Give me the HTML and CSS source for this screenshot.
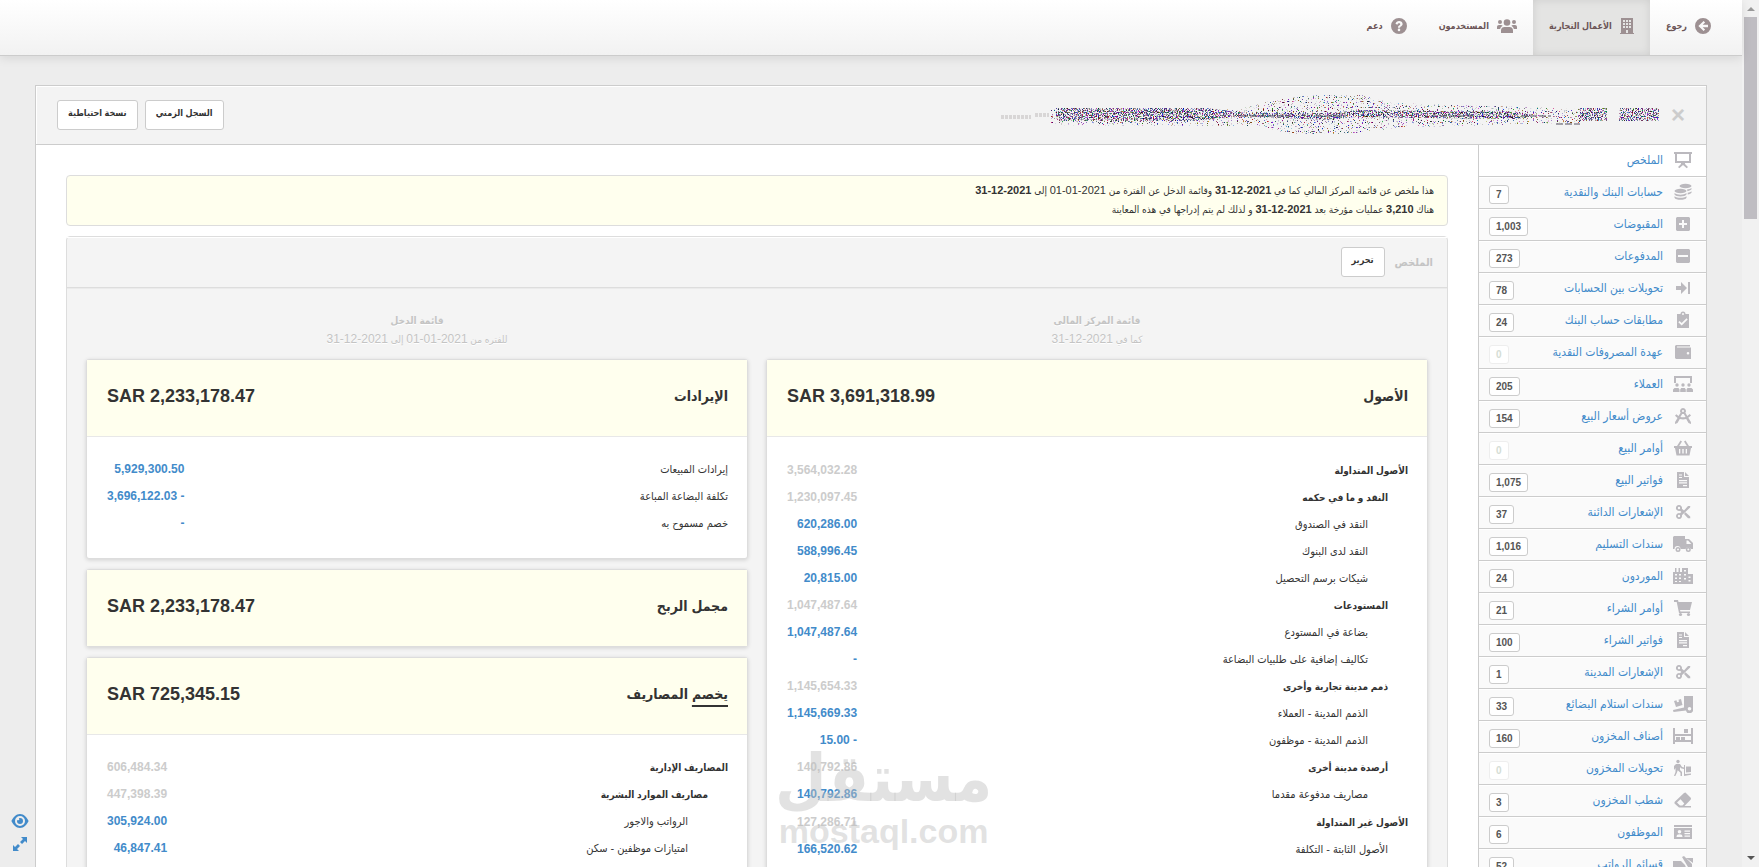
FILE: index.html
```html
<!DOCTYPE html>
<html lang="ar" dir="rtl">
  <head>
    <meta charset="UTF-8" />
    <meta name="viewport" content="width=device-width, initial-scale=1.0" />
    <title>الملخص</title>
    <link rel="stylesheet" href="styles.css">
  </head>

  <body>
    <!-- icons -->
    <svg class="sprite" aria-hidden="true">
      <symbol id="i-back" viewBox="0 0 16 16"><path fill-rule="evenodd" d="M8 0a8 8 0 1 1 0 16A8 8 0 0 1 8 0zM8.600 3L3.400 8l5.200 5 1.500-1.500L7.700 9.200H13V6.800H7.700l2.400-2.300z"/></symbol>
      <symbol id="i-building" viewBox="0 0 14 16"><path fill-rule="evenodd" d="M1 0h12v15h1v1H0v-1h1zM3 2v2h2V2zM6 2v2h2V2zM9 2v2h2V2zM3 5v2h2V5zM6 5v2h2V5zM9 5v2h2V5zM3 8v2h2V8zM6 8v2h2V8zM9 8v2h2V8zM6 12v3h2v-3z"/></symbol>
      <symbol id="i-users" viewBox="0 0 20 16"><circle cx="10" cy="4.500" r="3.300"/><circle cx="3" cy="4" r="2"/><circle cx="17" cy="4" r="2"/><path d="M4 15v-2.500C4 10 5.600 9 7.500 9h5c1.900 0 3.500 1 3.500 3.500V15zM0 11V9c0-1.300.8-2 2-2h2c.6 0 1.200.2 1.600.7C4.200 8.500 3.400 9.500 3.200 11zM20 11V9c0-1.300-.8-2-2-2h-2c-.6 0-1.200.2-1.600.7 1.400.8 2.200 1.800 2.400 3.300z"/></symbol>
      <symbol id="i-help" viewBox="0 0 16 16"><path fill-rule="evenodd" d="M8 0a8 8 0 1 1 0 16A8 8 0 0 1 8 0zM4.500 5.800l1.900.9C6.700 5.800 7.300 5.300 8 5.300c.8 0 1.300.4 1.300 1 0 1.200-2.400 1.200-2.400 3.400h2.200c0-1.400 2.500-1.500 2.500-3.700C11.600 4.200 10 3.100 8.100 3.100c-1.800 0-3 .9-3.600 2.700zM8 10.600a1.300 1.300 0 1 0 0 2.600 1.300 1.300 0 0 0 0-2.600z"/></symbol>
      <symbol id="i-summary" viewBox="0 0 20 18"><path fill-rule="evenodd" d="M1 1h18v2h-1v9h-6v1l3 3-1.300 1.200L10 14l-3.700 3.200L5 16l3-3v-1H2V3H1zM4 3v7h12V3z"/></symbol>
      <symbol id="i-coins" viewBox="0 0 20 18"><ellipse cx="12.500" cy="3" rx="6" ry="2.200"/><ellipse cx="7.500" cy="8" rx="6" ry="2.200"/><path d="M1.500 10c3 2.200 9 2.200 12 0v1.500c-1 2.600-11 2.600-12 0zM1.500 13.200c3 2.200 9 2.200 12 0v1.500c-1 2.800-11 2.800-12 0zM14 6.500c2-.3 3.600-.8 4.500-1.500v1.300c-.5.800-2 1.500-4 1.900zM14.700 9.800c1.700-.3 3-.8 3.800-1.500v1.400c-.5.800-1.800 1.300-3.800 1.700z"/></symbol>
      <symbol id="i-plus" viewBox="0 0 20 18"><path fill-rule="evenodd" d="M4 2h12l1 1v12l-1 1H4l-1-1V3zM9 5v3H6v2h3v3h2v-3h3V8h-3V5z"/></symbol>
      <symbol id="i-minus" viewBox="0 0 20 18"><path fill-rule="evenodd" d="M4 2h12l1 1v12l-1 1H4l-1-1V3zM5 8v2h10V8z"/></symbol>
      <symbol id="i-transfer" viewBox="0 0 20 18"><path d="M3 7h5V3l6 6-6 6v-4H3zM15 3h2v12h-2z"/></symbol>
      <symbol id="i-check" viewBox="0 0 20 18"><path fill-rule="evenodd" d="M4 3h3.500a2.500 2.500 0 0 1 5 0H16v14H4zM6.500 10L5.300 11.200 8.700 14.500l6-6L13.500 7.200 8.700 12zM10 2a1 1 0 1 0 0 2 1 1 0 0 0 0-2z"/></symbol>
      <symbol id="i-wallet" viewBox="0 0 20 18"><path fill-rule="evenodd" d="M3 2h14v1.500H4v1h14V16H3l-1-1V3zM15 9a1.300 1.300 0 1 0 0 2.600A1.300 1.300 0 0 0 15 9z"/></symbol>
      <symbol id="i-customers" viewBox="0 0 20 18"><path d="M1 1h18v7h-2V3H3v5H1z"/><circle cx="4" cy="10" r="1.700"/><circle cx="10" cy="10" r="1.700"/><circle cx="16" cy="10" r="1.700"/><path d="M0 17v-2.500L1.500 13h4L6.500 14.500V17zM7.200 17v-2.500l1-1.500h3.600l1 1.500V17zM13.500 17v-2.500l1-1.500h4l1.500 1.500V17z"/></symbol>
      <symbol id="i-quote" viewBox="0 0 20 18"><path fill-rule="evenodd" d="M10 1a3 3 0 0 1 2.400 4.800l1.900 3.300 2.400-2 1.300 1.400-2.700 2.200 2.600 4.300.1 2-2.500-1-2.300-4c-2.200.7-4.400.6-6.400 0l-2.300 4-2.500 1 .1-2L4.500 11 2 8.700l1.300-1.500L5.500 9l2.100-3.200A3 3 0 0 1 10 1zm0 2a1 1 0 1 0 0 2 1 1 0 0 0 0-2zM9.200 6.900L7.400 10c1.700.4 3.500.4 5.200 0l-1.800-3.100z"/></symbol>
      <symbol id="i-basket" viewBox="0 0 20 18"><path fill-rule="evenodd" d="M1 7h3l3.500-5.500L9 2.400 6.200 7h7.600L11 2.400l1.500-.9L16 7h3v2h-1l-1.500 7.500h-13L2 9H1zM6 10v4.500h1.300V10zM9.300 10v4.500h1.400V10zM12.700 10v4.500H14V10z"/></symbol>
      <symbol id="i-file" viewBox="0 0 20 18"><path fill-rule="evenodd" d="M4 1h7v5h5v11H4zM12 1l4 4h-4zM6 3.500v1h3v-1zM6 6v1h3V6zM6 9v1.200h8V9zM6 11.300v1.200h8v-1.200zM10 14v1.200h4V14z"/></symbol>
      <symbol id="i-cut" viewBox="0 0 20 18"><path fill-rule="evenodd" d="M6 2a3 3 0 0 1 2.900 3.800L11 7.600 15 3h2.300l-.2 1.500L8.900 12.200A3 3 0 1 1 7 10.200L8.400 9 7 7.800A3 3 0 1 1 6 2zm0 1.800a1.200 1.200 0 1 0 0 2.400 1.200 1.200 0 0 0 0-2.400zm0 8a1.200 1.200 0 1 0 0 2.400 1.200 1.200 0 0 0 0-2.400zM12.500 9.300l4.700 4.300.1 1.700H15l-4-4.400z"/></symbol>
      <symbol id="i-truck" viewBox="0 0 20 18"><path fill-rule="evenodd" d="M1 1h11v3h4l4 4v6h-2a3 3 0 0 0-5.500 0h-5A3 3 0 0 0 1.500 14H0V2zM13.500 5.500V9h4.800l-3.300-3.500z"/><path fill-rule="evenodd" d="M5 12a2.500 2.500 0 1 1 0 5 2.500 2.500 0 0 1 0-5zm0 1.500a1 1 0 1 0 0 2 1 1 0 0 0 0-2zM15.300 12a2.500 2.500 0 1 1 0 5 2.500 2.500 0 0 1 0-5zm0 1.500a1 1 0 1 0 0 2 1 1 0 0 0 0-2z"/></symbol>
      <symbol id="i-city" viewBox="0 0 20 18"><path fill-rule="evenodd" d="M0 5h2V1h1.500v4h2V1H7v4h2V1h6v6h5v10H0zM2 7v1.500h2V7zM6 7v1.500h2V7zM11 3v1.500h2V3zM11 7v1.500h2V7zM2 10.500V12h2v-1.500zM6 10.500V12h2v-1.500zM11 11v1.500h2V11zM15.500 9.500V11h2V9.500zM15.500 13v1.500h2V13zM2 14v1h2v-1zM6 14v1h2v-1z"/></symbol>
      <symbol id="i-cart" viewBox="0 0 20 18"><path d="M1 1h4l.5 2H19l-2 8H7l.4 1.500H17V14H6L3.700 3H1z"/><circle cx="7.500" cy="15.500" r="1.600"/><circle cx="15.500" cy="15.500" r="1.600"/></symbol>
      <symbol id="i-receive" viewBox="0 0 20 18"><path fill-rule="evenodd" d="M11 1h9v13a3.500 3.500 0 0 1-7 1.500L.5 17 0 15l11-2.500zM16.500 12a1.800 1.800 0 1 0 0 3.600 1.800 1.800 0 0 0 0-3.600z"/><path d="M1 6l2.500-.7.5 2 2-.5-.5-2L8 4l1.500 6-6.500 2z"/></symbol>
      <symbol id="i-shelf" viewBox="0 0 20 18"><path d="M0 1h2v6h16V1h2v16h-2v-2H2v2H0zM2 9v4h16V9z" fill-rule="evenodd"/><path d="M11 2h4v4h-4zM3 10h4v3H3zM8 10h4v3H8z"/></symbol>
      <symbol id="i-dolly" viewBox="0 0 20 18"><circle cx="5" cy="2.500" r="1.700"/><path d="M3 5h4l2 3 2 .6V10L8 9.300 7 8v3l2 2v4H7.500v-3.300L4.700 11.200 4 13.500 2.300 17H1l1.500-4V9L1 11V7zM11 6h1v9l6-.5v1.300L11 17zM13 7.500h5V13l-5 .5z"/></symbol>
      <symbol id="i-eraser" viewBox="0 0 20 18"><path fill-rule="evenodd" d="M1.500 11L11 2l1.500-.5L18 7l-.2 1.500L11.500 15H18v1.500H6L1.500 12.500zM7.500 8.200L4 11.600 7 14.500h2.500l1.800-2z"/></symbol>
      <symbol id="i-card" viewBox="0 0 20 18"><path d="M1 2h18v2H1z"/><path fill-rule="evenodd" d="M1 5h18v11H1zM6.500 7a1.800 1.800 0 1 0 0 3.600 1.800 1.800 0 0 0 0-3.600zM3.500 14h6c0-2-1-2.700-3-2.700s-3 .7-3 2.700zM11.500 7.500v1.200H17V7.500zM11.500 10v1.200H17V10zM11.500 12.500v1.200H17v-1.200z"/></symbol>
      <symbol id="i-payslip" viewBox="0 0 20 18"><path d="M0 6h8l4 4 2 5H0z"/><path d="M9 2l2-1 8 8v4l-4-1zM13 3h7v5z"/></symbol>
      <symbol id="i-eye" viewBox="0 0 18 14"><path fill-rule="evenodd" d="M9 0c4 0 7 3.500 8.600 7C16 10.500 13 14 9 14S2 10.500.4 7C2 3.500 5 0 9 0zm0 2a5 5 0 1 0 0 10A5 5 0 0 0 9 2zM9 4a3 3 0 1 1-3 3c0-.4.1-.8.300-1.100.3.700 1.900.6 2-.7 0-.5-.1-.7-.4-1C8.200 4.100 8.600 4 9 4z"/></symbol>
      <symbol id="i-expand" viewBox="0 0 14 14"><path d="M8 0h6v6l-2-2-3 3-2-2 3-3zM6 14H0V8l2 2 3-3 2 2-3 3z"/></symbol>
    </svg>

    <div class="scrollbar" aria-hidden="true">
      <span class="arrow up"></span>
      <span class="thumb"></span>
      <span class="arrow down"></span>
    </div>

    <div class="page">
      <nav class="navbar">
        <a href="#"><svg class="nav-icon"><use href="#i-back"/></svg>رجوع</a>
        <a href="#" class="active"><svg class="nav-icon narrow"><use href="#i-building"/></svg>الأعمال التجارية</a>
        <a href="#"><svg class="nav-icon wide"><use href="#i-users"/></svg>المستخدمون</a>
        <a href="#"><svg class="nav-icon"><use href="#i-help"/></svg>دعم</a>
      </nav>

      <div class="panel">
        <div class="panel-header">
          <div class="business">
            <button class="close" aria-label="إغلاق">×</button>
            <svg class="scribble" viewBox="0 0 660 40" preserveAspectRatio="none" aria-hidden="true">
              <filter id="grain" x="0" y="0" width="100%" height="100%" color-interpolation-filters="sRGB">
                <feTurbulence type="fractalNoise" baseFrequency="0.8" numOctaves="1" seed="4" result="n"/>
                <feColorMatrix in="n" values="2 0 0 0 -.65  0 1.600 0 0 -.5  0 0 2 0 -.55  0 0 0 12 -5.700"/>
                <feComposite in2="SourceGraphic" operator="in"/>
              </filter>
              <filter id="sparse" x="0" y="0" width="100%" height="100%" color-interpolation-filters="sRGB">
                <feTurbulence type="fractalNoise" baseFrequency="0.8" numOctaves="1" seed="9" result="n"/>
                <feColorMatrix in="n" values="2 0 0 0 -.6  0 1.600 0 0 -.45  0 0 2 0 -.5  0 0 0 14 -8.300"/>
                <feComposite in2="SourceGraphic" operator="in"/>
              </filter>
              <g filter="url(#sparse)"><path d="M50 14h190l30-8 40-6h50l30 8 190 6v14l-180 4-50 7h-60l-30-8-210-1z"/></g>
              <g filter="url(#grain)"><path d="M55 13h150l40 5h90l20-3 160 2 20 3-20 4-160-2-30 3-80-4-50 5H55zM578 13h28v13h-28zM618 13h40v13h-40z"/></g>
              <path class="thread" d="M240 21h50M315 21h30M430 21h45M520 21h30M555 29h24"/>
              <path class="fade" d="M0 22h30M34 20h14"/>
            </svg>
          </div>
          <div class="actions">
            <button class="btn">السجل الزمني</button>
            <button class="btn">نسخة احتياطية</button>
          </div>
        </div>

        <div class="panel-body">
          <ul class="sidebar">
            <li class="active"><a href="#"><svg class="icon"><use href="#i-summary"/></svg>الملخص</a></li>
            <li><a href="#"><svg class="icon"><use href="#i-coins"/></svg>حسابات البنك والنقدية</a><span class="badge">7</span></li>
            <li><a href="#"><svg class="icon"><use href="#i-plus"/></svg>المقبوضات</a><span class="badge">1,003</span></li>
            <li><a href="#"><svg class="icon"><use href="#i-minus"/></svg>المدفوعات</a><span class="badge">273</span></li>
            <li><a href="#"><svg class="icon"><use href="#i-transfer"/></svg>تحويلات بين الحسابات</a><span class="badge">78</span></li>
            <li><a href="#"><svg class="icon"><use href="#i-check"/></svg>مطابقات حساب البنك</a><span class="badge">24</span></li>
            <li><a href="#"><svg class="icon"><use href="#i-wallet"/></svg>عهدة المصروفات النقدية</a><span class="badge zero">0</span></li>
            <li><a href="#"><svg class="icon"><use href="#i-customers"/></svg>العملاء</a><span class="badge">205</span></li>
            <li><a href="#"><svg class="icon"><use href="#i-quote"/></svg>عروض أسعار البيع</a><span class="badge">154</span></li>
            <li><a href="#"><svg class="icon"><use href="#i-basket"/></svg>أوامر البيع</a><span class="badge zero">0</span></li>
            <li><a href="#"><svg class="icon"><use href="#i-file"/></svg>فواتير البيع</a><span class="badge">1,075</span></li>
            <li><a href="#"><svg class="icon"><use href="#i-cut"/></svg>الإشعارات الدائنة</a><span class="badge">37</span></li>
            <li><a href="#"><svg class="icon"><use href="#i-truck"/></svg>سندات التسليم</a><span class="badge">1,016</span></li>
            <li><a href="#"><svg class="icon"><use href="#i-city"/></svg>الموردون</a><span class="badge">24</span></li>
            <li><a href="#"><svg class="icon"><use href="#i-cart"/></svg>أوامر الشراء</a><span class="badge">21</span></li>
            <li><a href="#"><svg class="icon"><use href="#i-file"/></svg>فواتير الشراء</a><span class="badge">100</span></li>
            <li><a href="#"><svg class="icon"><use href="#i-cut"/></svg>الإشعارات المدينة</a><span class="badge">1</span></li>
            <li><a href="#"><svg class="icon"><use href="#i-receive"/></svg>سندات استلام البضائع</a><span class="badge">33</span></li>
            <li><a href="#"><svg class="icon"><use href="#i-shelf"/></svg>أصناف المخزون</a><span class="badge">160</span></li>
            <li><a href="#"><svg class="icon"><use href="#i-dolly"/></svg>تحويلات المخزون</a><span class="badge zero">0</span></li>
            <li><a href="#"><svg class="icon"><use href="#i-eraser"/></svg>شطب المخزون</a><span class="badge">3</span></li>
            <li><a href="#"><svg class="icon"><use href="#i-card"/></svg>الموظفون</a><span class="badge">6</span></li>
            <li><a href="#"><svg class="icon"><use href="#i-payslip"/></svg>قسائم الرواتب</a><span class="badge">52</span></li>
          </ul>

          <main class="content">
            <div class="notice">
              <p>هذا ملخص عن قائمة المركز المالي كما في <b dir="ltr">31-12-2021</b> وقائمة الدخل عن الفترة من <span dir="ltr">01-01-2021</span> إلى <b dir="ltr">31-12-2021</b></p>
              <p>هناك <b>3,210</b> عمليات مؤرخة بعد <b dir="ltr">31-12-2021</b> و لذلك لم يتم إدراجها في هذه المعاينة</p>
            </div>

            <section class="summary">
              <div class="summary-header">
                <h1>الملخص</h1>
                <button class="btn">تحرير</button>
              </div>

              <div class="columns">
                <div class="column">
                  <div class="statement">
                    <h2>قائمة المركز المالى</h2>
                    <p>كما في <span dir="ltr">31-12-2021</span></p>
                  </div>

                  <div class="card">
                    <div class="card-header"><h3>الأصول</h3><strong dir="ltr">SAR 3,691,318.99</strong></div>
                    <table>
                      <tr class="group top"><td>الأصول المتداولة</td><td>3,564,032.28</td></tr>
                      <tr class="group l1"><td>النقد و ما في حكمه</td><td>1,230,097.45</td></tr>
                      <tr class="l2"><td>النقد في الصندوق</td><td><a href="#">620,286.00</a></td></tr>
                      <tr class="l2"><td>النقد لدى البنوك</td><td><a href="#">588,996.45</a></td></tr>
                      <tr class="l2"><td>شيكات برسم التحصيل</td><td><a href="#">20,815.00</a></td></tr>
                      <tr class="group l1"><td>المستودعات</td><td>1,047,487.64</td></tr>
                      <tr class="l2"><td>بضاعة في المستودع</td><td><a href="#">1,047,487.64</a></td></tr>
                      <tr class="l2"><td>تكاليف إضافية على طلبيات البضاعة</td><td><a href="#">-</a></td></tr>
                      <tr class="group l1"><td>ذمم مدينة تجارية وأخرى</td><td>1,145,654.33</td></tr>
                      <tr class="l2"><td>الذمم المدينة - العملاء</td><td><a href="#">1,145,669.33</a></td></tr>
                      <tr class="l2"><td>الذمم المدينة - موظفون</td><td><a href="#">- 15.00</a></td></tr>
                      <tr class="group l1"><td>أرصدة مدينة أخرى</td><td>140,792.86</td></tr>
                      <tr class="l2"><td>مصاريف مدفوعة مقدما</td><td><a href="#">140,792.86</a></td></tr>
                      <tr class="group top"><td>الأصول غير المتداولة</td><td>127,286.71</td></tr>
                      <tr class="l1"><td>الأصول الثابتة - التكلفة</td><td><a href="#">166,520.62</a></td></tr>
                    </table>
                    <div class="watermark" aria-hidden="true">
                      <span class="mark-ar">مستقل</span>
                      <span class="mark-en" dir="ltr">mostaql.com</span>
                    </div>
                  </div>
                </div>

                <div class="column">
                  <div class="statement">
                    <h2>قائمة الدخل</h2>
                    <p>للفتره من <span dir="ltr">01-01-2021</span> إلى <span dir="ltr">31-12-2021</span></p>
                  </div>

                  <div class="card">
                    <div class="card-header"><h3>الإيرادات</h3><strong dir="ltr">SAR 2,233,178.47</strong></div>
                    <table>
                      <tr><td>إيرادات المبيعات</td><td><a href="#">5,929,300.50</a></td></tr>
                      <tr><td>تكلفة البضاعة المباعة</td><td><a href="#">- 3,696,122.03</a></td></tr>
                      <tr><td>خصم مسموح به</td><td><a href="#">-</a></td></tr>
                    </table>
                  </div>

                  <div class="card total">
                    <div class="card-header"><h3>مجمل الربح</h3><strong dir="ltr">SAR 2,233,178.47</strong></div>
                  </div>

                  <div class="card">
                    <div class="card-header"><h3><u>يخصم</u> المصاريف</h3><strong dir="ltr">SAR 725,345.15</strong></div>
                    <table>
                      <tr class="group"><td>المصاريف الإدارية</td><td>606,484.34</td></tr>
                      <tr class="group l1"><td>مصاريف الموارد البشرية</td><td>447,398.39</td></tr>
                      <tr class="l2"><td>الرواتب والاجور</td><td><a href="#">305,924.00</a></td></tr>
                      <tr class="l2"><td>امتيازات موظفين - سكن</td><td><a href="#">46,847.41</a></td></tr>
                    </table>
                  </div>
                </div>
              </div>
            </section>
          </main>
        </div>
      </div>
    </div>

    <div class="tools">
      <button aria-label="عرض"><svg width="18" height="14"><use href="#i-eye"/></svg></button>
      <button aria-label="تكبير"><svg width="14" height="14"><use href="#i-expand"/></svg></button>
    </div>
  </body>
</html>
```
FILE: styles.css
```css
* {
  box-sizing: border-box;
}

body {
  font-family: "Liberation Sans", "DejaVu Sans Condensed", "DejaVu Sans", sans-serif;
  font-size: 12px;
  margin: 0;
  height: 100vh;
  display: flex;
  overflow: hidden;
  background-color: #ededed;
  color: #333;
}

h1, h2, h3, p, ul {
  margin: 0;
  padding: 0;
}

a {
  color: #428bca;
  text-decoration: none;
}

button {
  font-family: inherit;
  cursor: pointer;
}

.sprite {
  display: none;
}

.page {
  flex: 1;
  min-width: 0;
}

/* scrollbar */
.scrollbar {
  width: 17px;
  padding: 7px 2px;
  background-color: #f1f1f1;
  display: flex;
  flex-direction: column;
  align-items: center;
}

.scrollbar .thumb {
  width: 13px;
  height: 202px;
  margin-top: 6px;
  background-color: #bfbdc2;
}

.arrow {
  border: 4px solid transparent;
}

.arrow.up {
  border-top: 0;
  border-bottom-color: #999;
}

.arrow.down {
  border-bottom: 0;
  border-top-color: #555;
  margin-top: auto;
}

/* top menu */
.navbar {
  display: flex;
  height: 56px;
  padding: 0 15px;
  background: linear-gradient(#fff, #f2f2f2);
  border-bottom: 1px solid #ccc;
  box-shadow: 0 2px 10px rgba(0, 0, 0, 0.1);
}

.navbar a {
  display: flex;
  align-items: center;
  gap: 8px;
  padding: 0 16px 4px;
  color: #6b5456;
  font-size: 9px;
  font-weight: bold;
}

.navbar .active {
  background-color: #e4e4e3;
  box-shadow: inset 0 0 8px rgba(0, 0, 0, 0.1);
}

.nav-icon {
  width: 16px;
  height: 16px;
  fill: #9d9092;
}

.nav-icon.narrow {
  width: 14px;
}

.nav-icon.wide {
  width: 20px;
}

/* main panel */
.panel {
  margin: 29px 35px 0;
  border: 1px solid #ccc;
  background-color: #fff;
}

.panel-header {
  display: flex;
  justify-content: space-between;
  align-items: center;
  height: 59px;
  padding: 0 21px;
  background-color: #f3f3f3;
  border-bottom: 1px solid #ccc;
  box-shadow: inset 1px 1px #fff;
}

.business {
  display: flex;
  align-items: center;
  gap: 10px;
}

.close {
  border: 0;
  padding: 0;
  width: 14px;
  background: none;
  color: #ccc;
  font-size: 24px;
  font-weight: bold;
  line-height: 24px;
}

.scribble {
  width: 660px;
  height: 40px;
}

.thread {
  stroke: #555060;
  stroke-width: 1;
  stroke-dasharray: 7 2;
  fill: none;
}

.fade {
  stroke: #d8d6d6;
  stroke-width: 4;
  stroke-dasharray: 3 1;
}

.actions {
  display: flex;
  gap: 7px;
}

.btn {
  height: 30px;
  padding: 0 10px 4px;
  background-color: #fff;
  border: 1px solid #ccc;
  border-radius: 3px;
  color: #333;
  font-size: 9px;
  font-weight: bold;
}

.panel-body {
  display: flex;
}

/* sidebar */
.sidebar {
  list-style-type: none;
  width: 228px;
  flex-shrink: 0;
  border-left: 1px solid #ccc;
}

.sidebar li {
  display: flex;
  justify-content: space-between;
  align-items: center;
  height: 32px;
  padding: 0 13px 0 10px;
  background-color: #fafafa;
  border-bottom: 1px solid #ccc;
  box-shadow: inset 0 1px #fff;
}

.sidebar .active {
  background-color: #fff;
}

.sidebar a {
  display: flex;
  align-items: center;
  gap: 10px;
  padding-bottom: 2px;
  font-size: 12px;
}

.icon {
  width: 20px;
  height: 18px;
  fill: #bbb9be;
}

.badge {
  height: 19px;
  margin-top: 4px;
  padding: 0 6px;
  background-color: #fff;
  border: 1px solid #ccc;
  border-radius: 3px;
  color: #555;
  font-size: 10px;
  font-weight: bold;
  line-height: 18px;
}

.badge.zero {
  border-color: #eee;
  color: #d5ddd5;
}

/* content */
.content {
  flex: 1;
  min-width: 0;
  padding: 30px;
}

.notice {
  height: 51px;
  padding: 5px 13px;
  margin-bottom: 10px;
  background-color: #ffffee;
  border: 1px solid #ddd;
  border-radius: 4px;
  font-size: 10px;
  line-height: 19px;
}

.notice b,
.notice span {
  font-size: 11px;
}

.summary {
  background-color: #f4f4f4;
  border: 1px solid #ddd;
  border-radius: 4px;
}

.summary-header {
  display: flex;
  align-items: center;
  gap: 10px;
  height: 51px;
  padding: 0 14px 0 20px;
  border-bottom: 1px solid #ddd;
  box-shadow: inset 0 1px #fff, 0 1px #ebebeb;
}

.summary-header h1 {
  color: #c4c4c4;
  font-size: 11px;
}

.columns {
  display: flex;
  gap: 18px;
  padding: 23px 19px;
}

.column {
  flex: 1;
}

.statement {
  margin-bottom: 10px;
  color: #c4c4c4;
  text-align: center;
  text-shadow: 0 1px #fff;
  font-size: 10px;
  line-height: 19px;
}

.statement h2 {
  font-size: 10px;
}

.statement span {
  font-size: 12px;
}

.card {
  position: relative;
  margin-bottom: 10px;
  background-color: #fff;
  border: 1px solid #ddd;
  border-radius: 3px;
  box-shadow: 0 1px 4px rgba(0, 0, 0, 0.15);
}

.card-header {
  display: flex;
  justify-content: space-between;
  align-items: center;
  height: 77px;
  padding: 0 19px 4px 20px;
  background-color: #ffffee;
  border-bottom: 1px solid #e8e8e8;
}

.card.total .card-header {
  height: 76px;
  border-bottom: 0;
}

.card-header h3 {
  font-size: 14px;
}

.card-header u {
  text-decoration-thickness: 2px;
  text-underline-offset: 6px;
}

.card-header strong {
  font-size: 18px;
}

table {
  width: 100%;
  padding: 19px 19px 21px 20px;
  border-spacing: 0;
}

td {
  height: 27px;
  padding: 0;
  font-size: 11px;
  line-height: 17px;
}

td:last-child {
  width: 1px;
  color: #ccc;
  font-size: 12px;
  font-weight: bold;
  text-align: right;
  white-space: nowrap;
}

.group {
  font-weight: bold;
}

.group td:first-child {
  font-size: 10px;
}

.group.top td {
  height: 28px;
}

.l1 td:first-child {
  padding-right: 20px;
}

.l2 td:first-child {
  padding-right: 40px;
}

/* logo over the table */
.watermark {
  position: absolute;
  left: 8px;
  top: 383px;
  display: flex;
  flex-direction: column;
  align-items: center;
  color: rgba(190, 190, 190, 0.45);
  font-weight: bold;
  pointer-events: none;
}

.mark-ar {
  font-size: 66px;
  line-height: 70px;
}

.mark-en {
  font-size: 34px;
  line-height: 36px;
}

/* floating tools */
.tools {
  position: fixed;
  left: 11px;
  bottom: 16px;
  display: flex;
  flex-direction: column;
  align-items: center;
  gap: 9px;
}

.tools button {
  display: flex;
  padding: 0;
  border: 0;
  background: none;
  fill: #428bca;
}
```
